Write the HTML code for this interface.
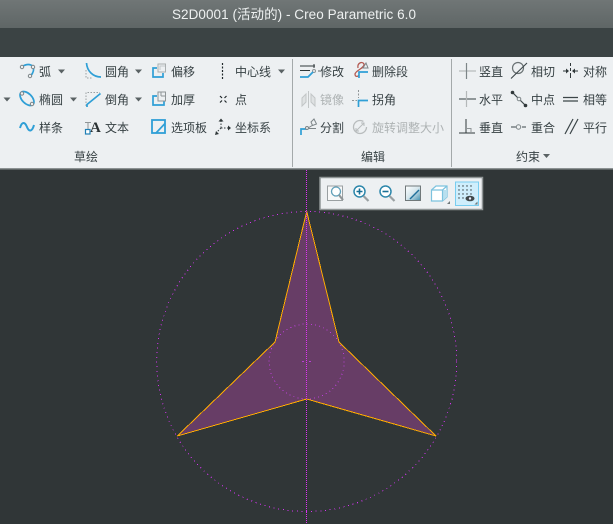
<!DOCTYPE html>
<html><head><meta charset="utf-8">
<style>
html,body{margin:0;padding:0;background:#2f3536;width:613px;height:524px;overflow:hidden}
svg{display:block}
text{font-family:"Liberation Sans","Noto Sans CJK SC",sans-serif;font-size:12px;fill:#37 4144;fill:#374144}
.g{fill:#aeb3b4}
.b{fill:none;stroke:#2f9fd6;stroke-width:1.700}
.k{fill:none;stroke:#30383a;stroke-width:1}
.a{fill:#5a6264}
.c{fill:#eef1f2;stroke:#7d8588;stroke-width:1}
.x{shape-rendering:crispEdges}
</style></head><body>
<svg width="613" height="524" viewBox="0 0 613 524" xmlns="http://www.w3.org/2000/svg">
<defs>
<linearGradient id="t" x1="0" y1="0" x2="0" y2="1"><stop offset="0" stop-color="#707676"/><stop offset="1" stop-color="#5f6666"/></linearGradient>
<linearGradient id="s" x1="0" y1="0" x2="1" y2="1"><stop offset="0" stop-color="#fff"/><stop offset=".5" stop-color="#d5e6ec"/><stop offset="1" stop-color="#3f8fb0"/></linearGradient>
</defs>
<rect width="613" height="524" fill="#303637"/>
<rect width="613" height="28" fill="url(#t)"/>
<rect y="28" width="613" height="29" fill="#3b4344"/>
<rect y="57" width="613" height="111" fill="#edf0f2"/>
<rect y="168" width="613" height="1.500" fill="#8c9293"/>
<text x="172" y="19" textLength="244" style="font-size:13.500px;fill:#eef1f1">S2D0001 (活动的) - Creo Parametric 6.0</text>

<!-- separators -->
<rect x="292" y="59" width="1" height="108" fill="#a4a9aa"/>
<rect x="451" y="59" width="1" height="108" fill="#a4a9aa"/>

<!-- labels -->
<text x="39" y="76">弧</text><text x="39" y="104">椭圆</text><text x="39" y="132">样条</text>
<text x="105" y="76">圆角</text><text x="105" y="104">倒角</text><text x="105" y="132">文本</text>
<text x="171" y="76">偏移</text><text x="171" y="104">加厚</text><text x="171" y="132">选项板</text>
<text x="235" y="76">中心线</text><text x="235" y="104">点</text><text x="235" y="132">坐标系</text>
<text x="74" y="161">草绘</text>
<text x="320" y="76">修改</text><text x="320" y="104" class="g">镜像</text><text x="320" y="132">分割</text>
<text x="372" y="76">删除段</text><text x="372" y="104">拐角</text><text x="372" y="132" class="g">旋转调整大小</text>
<text x="361" y="161">编辑</text>
<text x="479" y="76">竖直</text><text x="479" y="104">水平</text><text x="479" y="132">垂直</text>
<text x="531" y="76">相切</text><text x="531" y="104">中点</text><text x="531" y="132">重合</text>
<text x="583" y="76">对称</text><text x="583" y="104">相等</text><text x="583" y="132">平行</text>
<text x="516" y="161">约束</text>

<!-- dropdown arrows -->
<path class="a" d="M58 69.500h7l-3.500 4zM135 69.500h7l-3.500 4zM278 69.500h7l-3.500 4zM3.500 97.500h7l-3.500 4zM70 97.500h7l-3.500 4zM135 97.500h7l-3.500 4zM543 154h7l-3.500 4z"/>

<!-- arc -->
<path class="b" d="M22 66.500Q29 62.500 33 66.500Q35 71 30.500 76"/>
<circle class="c" cx="22" cy="67" r="1.700"/><circle class="c" cx="33" cy="67" r="1.700"/><circle class="c" cx="30" cy="76" r="1.700"/>
<!-- ellipse -->
<ellipse class="b" cx="27" cy="98.500" rx="8.500" ry="5" transform="rotate(45 27 98.500)"/>
<circle class="c" cx="22" cy="93.500" r="1.700"/><circle class="c" cx="32" cy="104" r="1.700"/>
<!-- spline -->
<path class="b" style="stroke-width:2" d="M20 128C22 121 25 122 27 127C29 132 32 132 34 125"/>
<!-- fillet -->
<path class="b" d="M86.500 63C87 71 93 77 101 77"/>
<path d="M86 70V78H93" fill="none" stroke="#9aa0a2" stroke-dasharray="1.500 1.500"/>
<!-- chamfer -->
<path d="M86 106V92.500H100" fill="none" stroke="#9aa0a2" stroke-dasharray="1.500 1.500"/>
<path class="b" d="M100.500 93.500L87 104.500V107"/>
<!-- text icon -->
<path d="M85 122.500H91M88 122.500V130" fill="none" stroke="#8f9597"/>
<text x="90" y="132" style="font-family:'Liberation Serif',serif;font-weight:bold;font-size:15px;fill:#2b3234">A</text>
<rect x="85.500" y="129.500" width="4.500" height="4.500" fill="#fff" stroke="#1f7fb5" stroke-width="1.200"/>
<!-- offset -->
<path class="b" d="M157 68H153V77H163V73"/>
<path d="M158 72V64H165.500V72Z" fill="#edf0f2" stroke="#a9aeaf"/><path d="M160 70V66H165" fill="none" stroke="#c4c8c9"/>
<!-- thicken -->
<path class="b" d="M157 96H153V105H164V101"/>
<path d="M158 101V92H165.500V101Z" fill="#edf0f2" stroke="#8f9597"/><path d="M161 96H165.500M161 92V96" fill="none" stroke="#8f9597"/>
<!-- palette -->
<rect class="b" x="152" y="120" width="13" height="13" style="stroke-width:1.800"/>
<path class="b" d="M156 133L165 123.500"/>
<!-- centerline -->
<path d="M222.500 63V79" stroke="#20272a" stroke-width="1.200" stroke-dasharray="2 1.500" fill="none"/>
<!-- point -->
<path d="M220 96l2 2m2.500 2.500l2 2M226.500 96l-2 2m-2.500 2.500l-2 2" stroke="#20272a" stroke-width="1.200" fill="none"/>
<!-- csys -->
<path d="M221 128V121M221 128H228M221 128L217 132" stroke="#30383a" stroke-dasharray="1.500 1.500" fill="none"/>
<path d="M221 118.500l-2.500 3h5zM231 128l-3-2.500v5zM215 135l1-4 3 3z" fill="#30383a"/>

<!-- modify -->
<path class="k" d="M300 66H315M314 64V68M300 70.500H310"/>
<circle cx="314" cy="71" r="1.500" fill="none" stroke="#8f9597"/><circle cx="319" cy="71" r="1" fill="#8f9597"/>
<path class="b" d="M300 77H308L313 72"/>
<!-- delete seg -->
<path d="M358 68C357 63 362 61 364 64C365 68 356 70 355 74C355 77 358 77 359 75" fill="none" stroke="#b35a52" stroke-width="1.300"/>
<path d="M363 68l3-5 2 5z" fill="#eef1f2" stroke="#7d8588"/>
<path class="b" d="M359 78V72H368"/>
<!-- mirror -->
<path d="M306 94L302 98V106L306 102ZM311 94L315 98V106L311 102ZM308.500 91V108" fill="#dfe2e3" stroke="#c2c6c7"/>
<!-- corner -->
<path d="M352 100.500H357M358.500 90V98" stroke="#8f9597" stroke-dasharray="2 1.500" fill="none"/>
<path class="b" d="M358.500 107V100.500H368"/>
<!-- divide -->
<path class="b" d="M301 135V129H307"/>
<path d="M311 122l3-3 2.500 5-4 1.500zM308 128L313 125M309 128.500H316" fill="none" stroke="#7d8588"/>
<circle class="c" cx="307" cy="128" r="1.500"/>
<!-- rotate resize -->
<circle cx="360" cy="127" r="6.500" fill="none" stroke="#b8bcbd" stroke-width="1.300" stroke-dasharray="34 7"/>
<path d="M356 131L364 123M361 123H364V126M356 128V131H359" fill="none" stroke="#b8bcbd"/>

<!-- constraints -->
<path d="M459 71H476" stroke="#a9aeaf" fill="none"/><path d="M466.500 63V79" stroke="#7d8588" stroke-width="1.200" fill="none"/>
<path d="M459 99H476" stroke="#5a6264" stroke-width="1.200" fill="none"/><path d="M466.500 91V107" stroke="#b4b8b9" stroke-width="1.200" fill="none"/>
<path d="M459 133H475M466 119V133" stroke="#30383a" fill="none"/><path d="M466 128.500H471V133" stroke="#8f9597" fill="none"/>
<circle cx="518" cy="68" r="5.500" fill="none" stroke="#6a7274" stroke-width="1.200"/>
<path d="M511 78.500L527 63" stroke="#3c4649" stroke-width="1.100" fill="none"/>
<path d="M512 92L526 106" stroke="#3c4649" stroke-width="1.200" fill="none"/>
<circle cx="512.500" cy="92.500" r="1.800" fill="#30383a"/><circle cx="525.500" cy="105.500" r="1.800" fill="#30383a"/><circle cx="519" cy="99" r="1.800" fill="#eef1f2" stroke="#7d8588"/>
<path d="M511 127H516M522 127H526" stroke="#3c4649" fill="none"/><circle cx="518.500" cy="127" r="2.200" fill="#eef1f2" stroke="#7d8588"/>
<path d="M570.500 63V66M570.500 68V71M570.500 73V78" stroke="#30383a" fill="none"/>
<path d="M563 71H566M575 71H578" stroke="#30383a" fill="none"/>
<path d="M569 71l-3-2.500v5zM572 71l3-2.500v5z" fill="#30383a"/>
<path d="M563 97.500H578M563 101H578" stroke="#3c4649" stroke-width="1.200" fill="none"/>
<path d="M565 134L573 119M570 134L578 119" stroke="#3c4649" stroke-width="1.200" fill="none"/>

<!-- floating toolbar -->
<rect x="320" y="177.500" width="162.500" height="32" fill="#edf0f2" stroke="#8f9596" stroke-width="1.500"/>
<rect x="327.500" y="186" width="15" height="14.500" fill="#f8f9f9" stroke="#9aa0a2"/>
<circle cx="336" cy="191.500" r="4.500" fill="#fff" stroke="#5f9fb8" stroke-width="1.300"/><path d="M339 195l4 5" stroke="#8f9597" stroke-width="2.200" fill="none"/>
<circle cx="359.500" cy="191.500" r="5.500" fill="#fff" stroke="#2d87ab" stroke-width="1.500"/><path d="M356.500 191.500h6M359.500 188.500v6" stroke="#186f95" stroke-width="1.600" fill="none"/><path d="M363.500 196l5 5" stroke="#9aa0a2" stroke-width="2.200" fill="none"/>
<circle cx="385.500" cy="191.500" r="5.500" fill="#fff" stroke="#2d87ab" stroke-width="1.500"/><path d="M382.500 191.500h6" stroke="#186f95" stroke-width="1.600" fill="none"/><path d="M389.500 196l5 5" stroke="#9aa0a2" stroke-width="2.200" fill="none"/>
<rect x="405.500" y="186" width="15" height="14.500" fill="url(#s)" stroke="#70787a"/>
<path d="M410 199L419 190" stroke="#1f6f9a" stroke-width="1.400" fill="none"/>
<path d="M431.500 190L436 186H447V197L442.500 201H431.500Z" fill="#ffffff" stroke="#7cc2de" stroke-width="1.200"/><path d="M442.500 190H447V197L442.500 201Z" fill="#b9e0ef"/><path d="M431.500 190H442.500V201M442.500 190L447 186" fill="none" stroke="#7cc2de" stroke-width="1.200"/>
<path d="M450 204h-3l3-3z" fill="#70787a"/>
<rect x="455.500" y="182" width="23" height="23.500" fill="#cfeefc" stroke="#78cdf0"/>
<g fill="#30383a"><circle cx="459" cy="186" r=".7"/><circle cx="463" cy="186" r=".7"/><circle cx="467" cy="186" r=".7"/><circle cx="471" cy="186" r=".7"/><circle cx="459" cy="190" r=".7"/><circle cx="463" cy="190" r=".7"/><circle cx="467" cy="190" r=".7"/><circle cx="471" cy="190" r=".7"/><circle cx="459" cy="194" r=".7"/><circle cx="463" cy="194" r=".7"/><circle cx="467" cy="194" r=".7"/><circle cx="471" cy="194" r=".7"/><circle cx="459" cy="198" r=".7"/><circle cx="463" cy="198" r=".7"/></g>
<ellipse cx="470" cy="198.500" rx="4.500" ry="2.800" fill="#40484a"/><circle cx="470" cy="198.500" r="1.200" fill="#eef"/>
<path d="M477.500 204.500h-3l3-3z" fill="#70787a"/>

<!-- sketch -->
<polygon points="306.700,211.500 339,342 436,436 306.700,399 177.300,436 275,342" fill="#673d66"/>
<circle class="x" cx="306.700" cy="361.500" r="150" fill="none" stroke="#d335f0" stroke-width="1" stroke-dasharray="1 3.700"/>
<circle class="x" cx="306.700" cy="361.500" r="37.500" fill="none" stroke="#b83fd4" stroke-width="1" stroke-dasharray="1 3.200"/>
<path class="x" d="M302 361.500H304M309 361.500H311" stroke="#b83fd4" fill="none"/>
<polygon class="x" points="306.700,211.500 339,342 436,436 306.700,399 177.300,436 275,342" fill="none" stroke="#ffab00" stroke-width="1"/>
<path class="x" d="M306.500 170V524" stroke="#e030f5" stroke-width="1" stroke-dasharray="1 1" fill="none"/>
</svg>
</body></html>
